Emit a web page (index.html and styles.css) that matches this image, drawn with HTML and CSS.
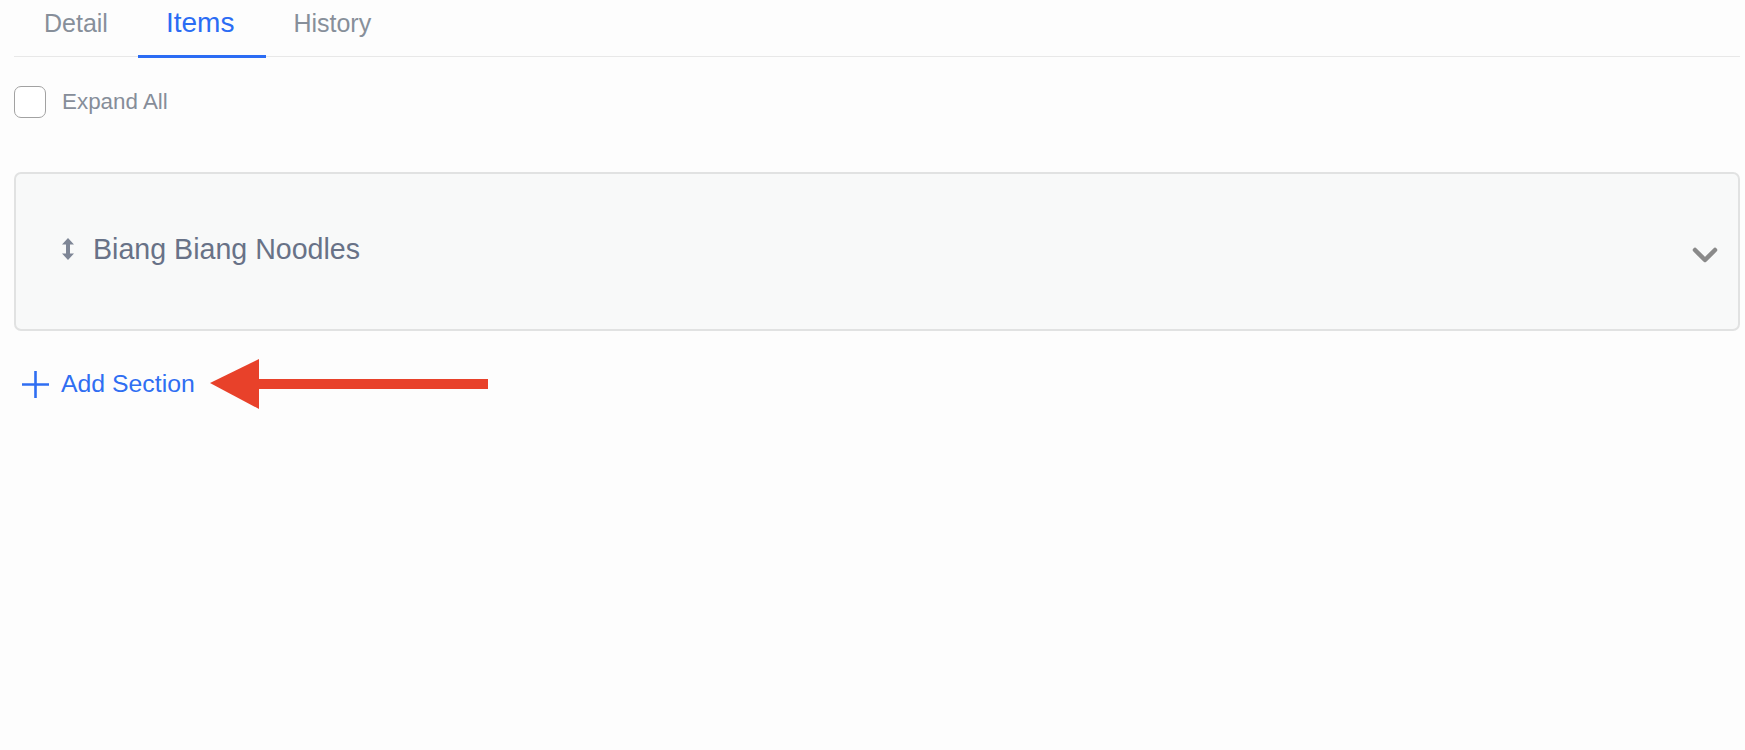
FILE: index.html
```html
<!DOCTYPE html>
<html lang="en">
<head>
    <meta charset="UTF-8">
    <meta name="viewport" content="width=device-width, initial-scale=1.0">
    <title>Items</title>
    <link rel="stylesheet" href="styles.css">
</head>
<body>
  <div class="container">
    <nav class="tabs">
      <a class="tab">Detail</a>
      <a class="tab active">Items</a>
      <a class="tab">History</a>
    </nav>

    <label class="expand">
      <span class="checkbox"></span>
      <span class="expand-label">Expand All</span>
    </label>

    <section class="sections">
      <article class="section">
        <svg class="drag" width="12" height="22" viewBox="0 0 12 22">
          <path d="M6 0 L12 6.5 H8 V15.5 H12 L6 22 L0 15.5 H4 V6.5 H0 Z" fill="#7e8696"/>
        </svg>
        <h3 class="section-title">Biang Biang Noodles</h3>
        <svg class="chevron" width="26" height="17" viewBox="0 0 26 17">
          <polyline points="3,3 13,13 23,3" fill="none" stroke="#8a8a8a" stroke-width="4.5" stroke-linecap="round" stroke-linejoin="round"/>
        </svg>
      </article>
    </section>

    <div class="add-row">
      <button type="button" class="add-btn">
        <svg width="27" height="27" viewBox="0 0 27 27">
          <path d="M13.5 0 V27 M0 13.5 H27" stroke="#2f6ef2" stroke-width="2.6"/>
        </svg>
        Add Section
      </button>
      <!-- annotation arrow -->
      <svg class="pointer" width="278" height="50" viewBox="0 0 278 50">
        <polygon points="0,24 49,0 49,50" fill="#e8412a"/>
        <rect x="48" y="20" width="230" height="10" fill="#e8412a"/>
      </svg>
    </div>
  </div>
</body>
</html>
```

FILE: styles.css
```css
* {
  margin: 0;
  padding: 0;
  box-sizing: border-box;
}
html, body {
  height: 100%;
  background-color: #fdfdfd;
  font-family: "Liberation Sans", Arial, sans-serif;
}
.container {
  padding: 0 5px 0 14px;
}
.tabs {
  display: flex;
  align-items: flex-start;
  height: 57px;
  border-bottom: 1px solid #e8e8e8;
}
.tab {
  display: block;
  height: 58px;
  padding: 3px 30px 0;
  line-height: 40px;
  font-size: 25px;
  color: #878f9a;
  border-bottom: 3px solid transparent;
}
.tab:last-child {
  padding-left: 27px;
}
.tab.active {
  font-size: 28px;
  color: #2b6cf4;
  border-bottom-color: #2b6cf4;
  padding: 3px 32px 0 28px;
}
.expand {
  display: flex;
  align-items: center;
  gap: 16px;
  margin-top: 29px;
}
.checkbox {
  width: 32px;
  height: 32px;
  border: 1.5px solid #a2a2a2;
  border-radius: 7px;
  background: #fff;
}
.expand-label {
  font-size: 22.4px;
  color: #868d99;
}
.sections {
  margin-top: 54px;
}
.section {
  display: flex;
  align-items: center;
  height: 159px;
  padding: 0 20px 5px 46px;
  background: #f8f9f9;
  border: 2px solid #e1e2e2;
  border-radius: 7px;
}
.drag {
  flex: none;
}
.section-title {
  flex: 1;
  margin-left: 19px;
  font-size: 28.6px;
  font-weight: normal;
  color: #687287;
}
.chevron {
  flex: none;
  margin-top: 13px;
}
.add-row {
  display: flex;
  align-items: center;
  margin-top: 28px;
  padding-left: 8px;
}
.add-btn {
  display: flex;
  align-items: center;
  gap: 12px;
  border: none;
  background: none;
  font-family: inherit;
  font-size: 24.8px;
  color: #2f6ef2;
}
.pointer {
  margin-left: 15px;
}
```
